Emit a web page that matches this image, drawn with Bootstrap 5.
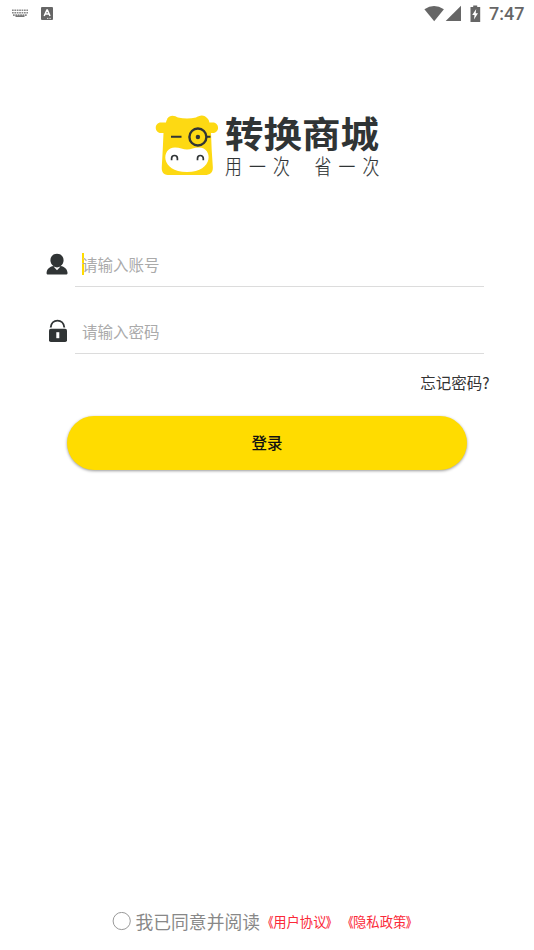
<!DOCTYPE html>
<html lang="zh-CN">
<head>
<meta charset="utf-8">
<meta name="viewport" content="width=device-width, initial-scale=1">
<title>登录</title>
<link href="https://cdn.jsdelivr.net/npm/bootstrap@5.3.0/dist/css/bootstrap.min.css" rel="stylesheet">
<style>
body{font-family:"Noto Sans CJK SC",sans-serif;background:#fff;color:#333}
.screen{height:950px;width:534px;overflow:hidden}
.status-bar{height:27px;padding:0 9px 0 12px;color:#666}
.input-badge{margin-left:13px}
.clock{font:500 18px/27px Roboto,sans-serif;margin-left:7px;width:36px;white-space:nowrap}
.brand-row{margin-top:86px;height:66px;padding-left:155px}
.brand-text{margin-left:6px}
.brand-name{font-size:38.5px;line-height:40px;font-weight:700;color:#303435;height:41px;white-space:nowrap;transform:scaleY(.94);transform-origin:50% 0}
.slogan{font-size:21px;line-height:22px;font-weight:300;color:#303435;letter-spacing:9px;white-space:nowrap;transform:scaleX(.8);transform-origin:left;width:200px;-webkit-text-stroke:.2px #303435}
.slogan span + span{margin-left:22px}
.login-form{padding:0 50px 0 46px;margin-top:62px}
.field-row{height:46px}
.field-row + .field-row{margin-top:20px;height:47px}
.field-icon{width:29px;padding-top:12px}
.field-icon svg{display:block}
.field-line{border-bottom:1px solid #dcdcdc;padding-left:7px;font-size:15.5px;line-height:48px;color:#aaa}
.field-row + .field-row .field-line{padding-top:2px}
.caret{width:2px;height:22px;background:#ffdc00;margin-right:-2px}
.forgot{font-size:15.5px;line-height:24px;padding-right:44.5px;margin-top:16px;color:#333}
.btn-login{width:400px;height:54px;margin-top:22px;background:#ffdc00!important;color:#111!important;border:0;font-size:15.5px;font-weight:500;box-shadow:0 1px 3px rgba(0,0,0,.4)}
.agree{padding-left:112px;height:30px;margin-bottom:14px;white-space:nowrap}
.agree-label{font-size:17.8px;line-height:30px;color:#888;margin-left:4.5px;padding-bottom:1px}
.agree-link{font-size:13.3px;line-height:30px;color:#fb2939;text-decoration:none;padding-top:2px}
.agree-link span{display:inline-block;transform:scaleX(.78);transform-origin:right;-webkit-text-stroke:.25px #fb2939}
.agree-link span:last-child{transform-origin:left}
</style>
</head>
<body>
<main class="screen d-flex flex-column">
  <header class="status-bar d-flex align-items-center">
    <svg width="16" height="9" viewBox="0 0 16 9"><g stroke="#888" stroke-width="1.6" stroke-dasharray="1.7 .7"><path d="M0 1.2h16M0 3.8h16"/><path d="M1 6.1h14"/></g><path d="M3.5 7.2h9" stroke="#777" stroke-width="1.6"/></svg>
    <svg class="input-badge" width="12" height="13" viewBox="0 0 12 13"><rect width="12" height="13" rx="1" fill="#666"/><path d="M3.2 9 5.9 3h.5l2.6 6M4.4 7h3.5" fill="none" stroke="#fff" stroke-width="1.5"/><path d="M6 11.4h4" stroke="#ddd" stroke-dasharray="1 .6"/></svg>
    <svg class="ms-auto" width="58" height="18" viewBox="0 0 58 18" fill="#666"><path d="M.4 4.3Q10 -2.3 19.9 4.3L10.2 16.2z"/><path d="M37 .7v15.300H21.700z"/><path d="M46.500 2.100h2.700V.5h4v1.600h3V17h-9.700z"/><path d="m52.200 4-4 6h2.300l-.5 4.500 4-6.300h-2.300z" fill="#fff"/></svg>
    <span class="clock">7:47</span>
  </header>

  <section class="brand-row d-flex">
    <svg width="64" height="66" viewBox="155 113 64 66">
      <path d="M167 119c3-5 8-3.500 11-1.500q9 2 18 0c3-2 8-4 12 1.500q1.500 2 1.300 3.500h3.500c7 0 7 10.500 0 10.500H211q.5 17 1.800 33.500c.5 6-2.500 8.500-8 8.500h-35c-6 0-8.500-2.500-8-8.500q1-16 1.700-33.500h-2.500c-7 0-7-10.500 0-10.500h5q0-1.500 1.300-3.500z" fill="#fdd913"/>
      <path d="M187 149.500c4 0 7-2 12-2 14 0 15 24.500-12 24.500s-26-24.500-12-24.500c5 0 8 2 12 2z" fill="#fff"/>
      <g fill="none" stroke="#303435" stroke-width="2"><path d="M171 136.800h10.500M206.500 136.800h4"/><circle cx="197.900" cy="137" r="8.500" stroke-width="2.400"/><path d="M171.600 160.200v-1.800a2.900 2.900 0 0 1 5.800 0v1.800M197.500 160.200v-1.800a2.900 2.900 0 0 1 5.800 0v1.800" stroke-width="1.700"/></g><circle cx="197.900" cy="137" r="2.200" fill="#303435"/>
    </svg>
    <div class="brand-text">
      <div class="brand-name">转换商城</div>
      <div class="slogan"><span>用一次</span><span>省一次</span></div>
    </div>
  </section>

  <form class="login-form">
    <div class="field-row d-flex">
      <div class="field-icon"><svg width="22" height="22" viewBox="0 0 22 22" fill="#303435"><path d="M11 .8c4 0 6.600 2.800 6.600 6.500 0 2.700-1.300 4.500-3 5.600 4 .8 6.400 2.700 6.900 6.600.2 1.500-.5 2-1.600 2H2.200c-1.200 0-1.800-.6-1.600-2 .5-3.900 3-5.800 6.900-6.600-1.700-1.100-3.100-2.900-3.100-5.600C4.400 3.600 7 .8 11 .8z"/><path d="m7.500 13.600 3.500 1 3.500-1-3.500 3.700z" fill="#fff"/></svg></div>
      <div class="field-line flex-grow-1 d-flex align-items-center"><span class="caret"></span><span>请输入账号</span></div>
    </div>
    <div class="field-row d-flex">
      <div class="field-icon"><svg width="22" height="24" viewBox="0 0 22 24"><path d="M4.700 8.500C5 4 8 1.600 11.500 1.600S18 4 18.300 8.500" fill="none" stroke="#303435" stroke-width="1.900"/><rect x="3" y="9.700" width="18" height="13.300" rx="1.800" fill="#303435"/><rect x="10.300" y="13.200" width="3" height="6" fill="#fff"/></svg></div>
      <div class="field-line flex-grow-1 d-flex align-items-center"><span>请输入密码</span></div>
    </div>
  </form>
  <div class="forgot text-end">忘记密码?</div>
  <button type="button" class="btn btn-login btn-warning rounded-pill align-self-center">登录</button>

  <footer class="agree d-flex align-items-center mt-auto">
    <svg width="19" height="19" viewBox="0 0 19 19"><circle cx="9.700" cy="9" r="8.600" fill="none" stroke="#999"/></svg>
    <span class="agree-label">我已同意并阅读</span>
    <a class="agree-link" href="#"><span>《</span>用户协议<span>》</span></a>
    <a class="agree-link" href="#"><span>《</span>隐私政策<span>》</span></a>
  </footer>
</main>
<script src="https://cdn.jsdelivr.net/npm/bootstrap@5.3.0/dist/js/bootstrap.bundle.min.js"></script>
</body>
</html>
